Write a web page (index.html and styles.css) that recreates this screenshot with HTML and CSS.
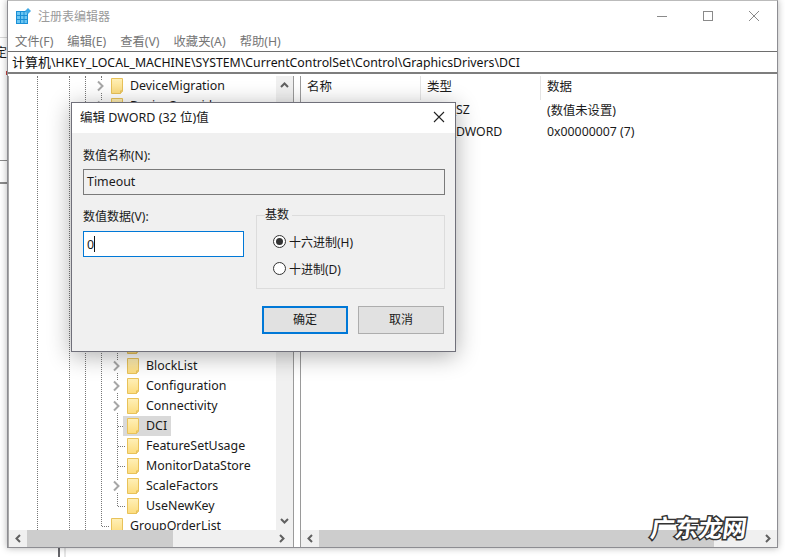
FILE: index.html
```html
<!DOCTYPE html>
<html lang="zh-CN">
<head>
<meta charset="utf-8">
<title>注册表编辑器</title>
<link rel="stylesheet" href="styles.css">
</head>
<body>
<svg class="defs" width="0" height="0" aria-hidden="true">
  <defs>
    <linearGradient id="fg" x1="0" y1="0" x2="0" y2="1"><stop offset="0" stop-color="#fff0b8"/><stop offset="1" stop-color="#fcdc7e"/></linearGradient>
    <symbol id="folder" viewBox="0 0 12 16"><path d="M.5.5h11v12.5h-2v2.500h-9z" fill="url(#fg)" stroke="#e8c25a"/><path d="M9.500 15.500v-2.500h2z" fill="#f6dc90" stroke="#e8c25a"/></symbol>
    <symbol id="chev" viewBox="0 0 8 12"><path d="M1.500 1.500 6 6l-4.500 4.500" fill="none" stroke="#a6a6a6" stroke-width="2"/></symbol>
  </defs>
</svg>

<div class="bg-frag">
  <div class="frag-line one"></div>
  <span class="frag-text">定</span>
  <div class="frag-red"></div>
  <div class="frag-line two"></div>
  <div class="frag-line three"></div>
  <div class="frag-foot"></div>
</div>

<div class="window">
  <header class="titlebar">
    <svg class="appicon" width="15" height="16" viewBox="0 0 15 16">
      <rect x="0" y="3" width="12" height="13" fill="#1a8fd6"/>
      <path d="M1 4h3v3H1zM5 4h2.500v3H5zM8.500 4H11v3H8.500zM1 8h3v3H1zM5 8h2.500v3H5zM8.500 8H11v3H8.500zM1 12h3v3H1zM5 12h2.500v3H5zM8.500 12H11v3H8.500z" fill="#6cc6f2"/>
      <path d="M12 0l3 3-3 3-3-3z" fill="#3fa9e6"/>
    </svg>
    <span class="apptitle">注册表编辑器</span>
    <div class="winctl">
      <svg width="12" height="12" viewBox="0 0 12 12"><path d="M1 6.500h10" stroke="#8a8a8a"/></svg>
      <svg width="12" height="12" viewBox="0 0 12 12"><rect x="1.500" y="1.500" width="9" height="9" fill="none" stroke="#8a8a8a"/></svg>
      <svg width="12" height="12" viewBox="0 0 12 12"><path d="M1 1l10 10M11 1 1 11" stroke="#8a8a8a"/></svg>
    </div>
  </header>
  <nav class="menubar">
    <span class="menu">文件(F)</span>
    <span class="menu">编辑(E)</span>
    <span class="menu">查看(V)</span>
    <span class="menu">收藏夹(A)</span>
    <span class="menu">帮助(H)</span>
  </nav>
  <div class="address"><span class="addr-cjk">计算机</span>\HKEY_LOCAL_MACHINE\SYSTEM\CurrentControlSet\Control\GraphicsDrivers\DCI</div>
  <div class="panes">
    <section class="pane left">
      <div class="pane-main">
        <div class="tree">
          <i class="guide g1"></i><i class="guide g2"></i><i class="guide g3"></i><i class="guide g4"></i><i class="guide g5"></i>
          <i class="hguide h1"></i><i class="hguide h2"></i><i class="hguide h3"></i><i class="hguide h4"></i><i class="hguide h5"></i>
          <div class="row l1"><svg class="arrow"><use href="#chev"/></svg><span class="item"><svg class="folder"><use href="#folder"/></svg>DeviceMigration</span></div>
          <div class="row l1"><svg class="arrow"><use href="#chev"/></svg><span class="item"><svg class="folder"><use href="#folder"/></svg>DeviceOverrides</span></div>
          <div class="rows-hidden"></div>
          <div class="row l2"><svg class="arrow"><use href="#chev"/></svg><span class="item"><svg class="folder"><use href="#folder"/></svg></span></div>
          <div class="row l2"><svg class="arrow"><use href="#chev"/></svg><span class="item"><svg class="folder"><use href="#folder"/></svg>BlockList</span></div>
          <div class="row l2"><svg class="arrow"><use href="#chev"/></svg><span class="item"><svg class="folder"><use href="#folder"/></svg>Configuration</span></div>
          <div class="row l2"><svg class="arrow"><use href="#chev"/></svg><span class="item"><svg class="folder"><use href="#folder"/></svg>Connectivity</span></div>
          <div class="row l2 noarrow"><span class="item selected"><svg class="folder"><use href="#folder"/></svg>DCI</span></div>
          <div class="row l2 noarrow"><span class="item"><svg class="folder"><use href="#folder"/></svg>FeatureSetUsage</span></div>
          <div class="row l2 noarrow"><span class="item"><svg class="folder"><use href="#folder"/></svg>MonitorDataStore</span></div>
          <div class="row l2"><svg class="arrow"><use href="#chev"/></svg><span class="item"><svg class="folder"><use href="#folder"/></svg>ScaleFactors</span></div>
          <div class="row l2 noarrow"><span class="item"><svg class="folder"><use href="#folder"/></svg>UseNewKey</span></div>
          <div class="row l1 noarrow"><span class="item"><svg class="folder"><use href="#folder"/></svg>GroupOrderList</span></div>
        </div>
        <div class="vscroll">
          <svg width="9" height="6" viewBox="0 0 9 6"><path d="M1 5l3.500-3.500L8 5" fill="none" stroke="#606060" stroke-width="2"/></svg>
          <svg width="9" height="6" viewBox="0 0 9 6"><path d="M1 1l3.500 3.500L8 1" fill="none" stroke="#606060" stroke-width="2"/></svg>
        </div>
      </div>
      <div class="hscroll tree-h">
        <svg width="6" height="9" viewBox="0 0 6 9"><path d="M5 1 1.500 4.500 5 8" fill="none" stroke="#606060" stroke-width="2"/></svg>
        <div class="thumb"></div>
        <svg width="6" height="9" viewBox="0 0 6 9"><path d="M1 1l3.500 3.500L1 8" fill="none" stroke="#606060" stroke-width="2"/></svg>
      </div>
    </section>
    <section class="pane right">
      <div class="list">
        <div class="list-head"><span>名称</span><span>类型</span><span>数据</span></div>
        <div class="list-row first"><span></span><span>REG_SZ</span><span>(数值未设置)</span></div>
        <div class="list-row"><span></span><span>REG_DWORD</span><span>0x00000007 (7)</span></div>
      </div>
      <div class="hscroll list-h">
        <svg width="6" height="9" viewBox="0 0 6 9"><path d="M5 1 1.500 4.500 5 8" fill="none" stroke="#606060" stroke-width="2"/></svg>
        <div class="thumb"></div>
        <svg width="6" height="9" viewBox="0 0 6 9"><path d="M1 1l3.500 3.500L1 8" fill="none" stroke="#606060" stroke-width="2"/></svg>
      </div>
    </section>
  </div>
</div>

<div class="dialog">
  <header class="dlg-title">
    <span>编辑 DWORD (32 位)值</span>
    <svg width="12" height="12" viewBox="0 0 12 12"><path d="M1 1l10 10M11 1 1 11" stroke="#222" stroke-width="1.100"/></svg>
  </header>
  <div class="dlg-body">
    <div class="lbl name-lbl">数值名称(N):</div>
    <div class="field readonly">Timeout</div>
    <div class="dlg-mid">
      <div class="data-col">
        <div class="lbl data-lbl">数值数据(V):</div>
        <div class="field focus">0<i class="caret"></i></div>
      </div>
      <fieldset class="base">
        <legend>基数</legend>
        <div class="radio-row"><i class="radio on"></i>十六进制(H)</div>
        <div class="radio-row"><i class="radio"></i>十进制(D)</div>
      </fieldset>
    </div>
    <div class="dlg-btns">
      <div class="btn primary">确定</div>
      <div class="btn">取消</div>
    </div>
  </div>
</div>

<div class="watermark">广东龙网</div>
</body>
</html>
```

FILE: styles.css
```css
* { box-sizing: border-box; }
html, body { margin: 0; padding: 0; width: 785px; height: 557px; overflow: hidden; background: #fff; }
body { font-family: "Noto Sans", "Noto Sans CJK SC", sans-serif; font-size: 12.3px; color: #1a1a1a; position: relative; }
.defs { position: absolute; }

.bg-frag { position: absolute; left: 0; top: 0; width: 785px; height: 557px; }
.frag-line { position: absolute; left: 0; width: 8px; }
.frag-line.one { top: 37px; height: 1px; background: #d8d8d8; }
.frag-line.two { top: 160px; height: 1px; background: #8c8c8c; }
.frag-line.three { top: 182px; height: 2px; background: #8c8c8c; }
.frag-text { position: absolute; left: -5px; top: 45px; font-size: 12px; line-height: 16px; }
.frag-red { position: absolute; left: 6px; top: 71px; width: 2px; height: 4px; background: #c8413c; }
.frag-foot { position: absolute; left: 58px; top: 548px; width: 2px; height: 9px; background: #66666b; box-shadow: 6px 0 0 0 #e6e6e6; }

.window { position: absolute; left: 7px; top: 0; width: 771px; height: 548px; background: #fff; border: 1px solid #8d8d92; border-top-color: #bbb; display: flex; flex-direction: column; box-shadow: 0 0 7px rgba(0,0,0,.3); }

.titlebar { height: 29px; display: flex; align-items: center; padding-left: 8px; flex: none; }
.appicon { margin-right: 7px; }
.apptitle { font-size: 12px; color: #9a9a9a; }
.winctl { margin-left: auto; display: flex; gap: 34px; padding-right: 17px; }

.menubar { height: 21px; display: flex; align-items: center; padding-left: 7px; font-size: 12.3px; color: #767676; flex: none; }
.menu { margin-right: 14px; }

.address { height: 23px; flex: none; border-top: 1px solid #6e6e6e; border-bottom: 2px solid #7e7e7e; padding-left: 4px; font-size: 12.3px; line-height: 20px; color: #111; white-space: nowrap; margin: 0 0 2px; }
.addr-cjk { font-size: 13px; }

.panes { flex: 1; display: flex; min-height: 0; gap: 6px; }
.pane { display: flex; flex-direction: column; min-width: 0; }
.pane.left { width: 286px; border-right: 1px solid #9a9a9a; border-left: 1px solid #a8a8a8; }
.pane.right { flex: 1; border-left: 1px solid #9a9a9a; }
.pane-main { flex: 1; display: flex; min-height: 0; }

.tree { flex: 1; position: relative; overflow: hidden; min-width: 0; }
.rows-hidden { height: 220px; }
.row { position: relative; height: 20px; display: flex; align-items: center; white-space: nowrap; font-size: 12.4px; }
.row.l1 { padding-left: 85px; }
.row.l2 { padding-left: 101px; }
.row.noarrow.l1 { padding-left: 98px; }
.row.noarrow.l2 { padding-left: 114px; }
.arrow { width: 13px; height: 12px; flex: none; background: #fff; }
.item { display: flex; align-items: center; height: 20px; padding: 0 4px 2px; gap: 7px; }
.item.selected { background: #d9d9d9; }
.folder { width: 12px; height: 16px; flex: none; margin-bottom: -2px; }

.guide { position: absolute; top: 0; width: 0; border-left: 1px dotted #777; }
.g1 { left: 28px; bottom: 0; }
.g2 { left: 60px; bottom: 0; }
.g3 { left: 76px; bottom: 0; }
.g4 { left: 92px; height: 450px; }
.g5 { left: 108px; top: 260px; height: 170px; }
.hguide { position: absolute; height: 0; border-top: 1px dotted #777; }
.h1 { left: 109px; top: 350px; width: 7px; }
.h2 { left: 109px; top: 370px; width: 7px; }
.h3 { left: 109px; top: 390px; width: 7px; }
.h4 { left: 109px; top: 430px; width: 7px; }
.h5 { left: 93px; top: 450px; width: 7px; }

.vscroll { width: 17px; flex: none; background: #f0f0f0; display: flex; flex-direction: column; justify-content: space-between; align-items: center; padding: 6px 0; }

.hscroll { height: 17px; flex: none; background: #f0f0f0; display: flex; align-items: center; }
.hscroll .thumb { height: 100%; background: #cdcdcd; }
.tree-h { padding: 0 8px 0 6px; }
.tree-h .thumb { width: 146px; margin-left: 6px; margin-right: auto; }
.list-h { padding: 0 6px; }
.list-h .thumb { width: 395px; margin-left: 6px; margin-right: auto; }

.list { flex: 1; min-height: 0; }
.list-head { height: 24px; display: grid; grid-template-columns: 120px 120px 1fr; align-items: center; font-size: 12.5px; }
.list-head span { padding-left: 6px; height: 24px; line-height: 22px; border-right: 1px solid #e5e5e5; }
.list-head span:last-child { border-right: 0; }
.list-row { height: 21px; display: grid; grid-template-columns: 120px 120px 1fr; align-items: center; white-space: nowrap; }
.list-row span { padding: 0 0 2px 6px; }
.list-row.first + .list-row span { padding-bottom: 1px; }

.dialog { position: absolute; left: 71px; top: 102px; width: 385px; height: 250px; background: #f0f0f0; border: 1px solid #70707a; box-shadow: 0 4px 22px rgba(0,0,0,.32); display: flex; flex-direction: column; }
.dlg-title { height: 30px; background: #fff; display: flex; align-items: center; justify-content: space-between; padding: 0 10px 3px 8px; flex: none; font-size: 12.5px; }
.dlg-body { flex: 1; padding: 15px 10px 0 11px; font-size: 12px; display: flex; flex-direction: column; }
.lbl { font-size: 12px; line-height: 16px; }
.name-lbl { margin-bottom: 5px; }
.data-lbl { padding-top: 1px; height: 17px; }
.field { border: 1px solid #7a7a7a; height: 26px; line-height: 23px; padding-left: 3px; font-size: 12.4px; }
.field.focus { border-color: #0078d7; background: #fff; display: flex; align-items: center; margin-top: 6px; width: 161px; }
.caret { display: inline-block; width: 1px; height: 16px; background: #111; }
.dlg-mid { display: flex; justify-content: space-between; margin-top: 13px; height: 98px; }
.base { margin: 0; border: 1px solid #dcdcdc; padding: 6px 0 0; width: 189px; height: 81px; }
.base legend { padding: 0 3px 0 0; margin-left: 8px; font-size: 12px; line-height: 14px; }
.radio-row { display: flex; align-items: center; height: 27px; font-size: 12px; gap: 3px; padding-left: 16px; }
.radio { width: 13px; height: 13px; border: 1px solid #333; border-radius: 50%; background: #fff; flex: none; display: flex; align-items: center; justify-content: center; }
.radio.on::before { content: ""; width: 7px; height: 7px; border-radius: 50%; background: #333; }
.dlg-btns { display: flex; justify-content: flex-end; gap: 10px; padding-right: 1px; }
.btn { width: 86px; height: 28px; background: #e1e1e1; border: 1px solid #adadad; text-align: center; line-height: 26px; font-size: 12px; }
.btn.primary { border: 2px solid #0078d7; line-height: 24px; }

.watermark { position: absolute; left: 651px; top: 510px; font-family: "Noto Sans CJK SC", sans-serif; font-weight: 700; font-size: 24px; line-height: 34px; color: #fff; -webkit-text-stroke: 3px #333; paint-order: stroke fill; transform: skewX(-8deg); white-space: nowrap; }
```
